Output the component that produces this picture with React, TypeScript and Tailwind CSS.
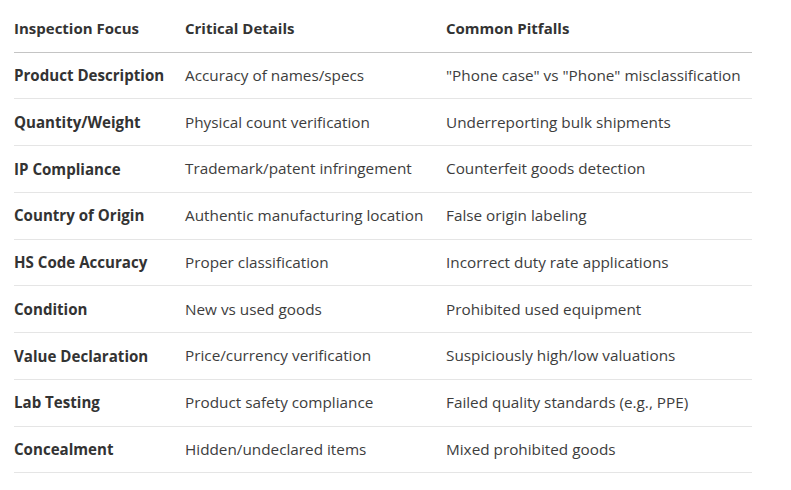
const ROWS = [
  ["Product Description", "Accuracy of names/specs", '"Phone case" vs "Phone" misclassification'],
  ["Quantity/Weight", "Physical count verification", "Underreporting bulk shipments"],
  ["IP Compliance", "Trademark/patent infringement", "Counterfeit goods detection"],
  ["Country of Origin", "Authentic manufacturing location", "False origin labeling"],
  ["HS Code Accuracy", "Proper classification", "Incorrect duty rate applications"],
  ["Condition", "New vs used goods", "Prohibited used equipment"],
  ["Value Declaration", "Price/currency verification", "Suspiciously high/low valuations"],
  ["Lab Testing", "Product safety compliance", "Failed quality standards (e.g., PPE)"],
  ["Concealment", "Hidden/undeclared items", "Mixed prohibited goods"],
];

export default function App() {
  return (
    <div className="h-[490px] w-[791px] overflow-hidden bg-white pl-[14px] pt-[5px] font-['Open_Sans',sans-serif] text-[15.3px] text-[#3d3d3d]">
      <table className="w-[738px] table-fixed border-collapse">
        <colgroup>
          <col className="w-[171px]" />
          <col className="w-[261px]" />
          <col className="w-[306px]" />
        </colgroup>
        <thead>
          <tr className="border-b border-[#c4c4c4] text-[15px] text-[#333]">
            <th className="h-[47px] p-0 text-left font-bold">Inspection Focus</th>
            <th className="h-[47px] p-0 text-left font-bold">Critical Details</th>
            <th className="h-[47px] p-0 text-left font-bold">Common Pitfalls</th>
          </tr>
        </thead>
        <tbody>
          {ROWS.map((r) => (
            <tr key={r[0]} className="border-b border-[#e5e5e5]">
              <td className="h-[46.75px] p-0 text-[15.1px] font-bold text-[#333]">{r[0]}</td>
              <td className="h-[46.75px] p-0">{r[1]}</td>
              <td className="h-[46.75px] p-0">{r[2]}</td>
            </tr>
          ))}
        </tbody>
      </table>
    </div>
  );
}
